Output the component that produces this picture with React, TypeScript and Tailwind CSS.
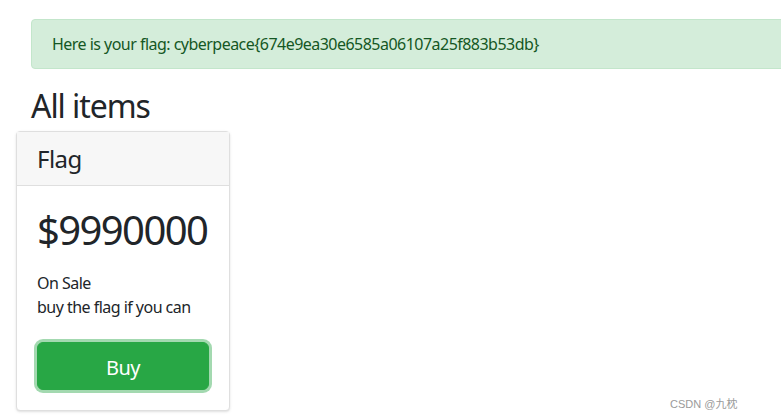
import React from "react"

export default function App() {
  return (
    <div className="relative w-[781px] h-[418px] overflow-hidden bg-white text-[#212529] font-['Noto_Sans',sans-serif] tracking-[-0.033em]">
      <div className="pl-[31px] pt-[19px]">
        <div className="w-[800px] h-[50px] rounded border border-[#c3e6cb] bg-[#d4edda] text-[#155724] text-[16px] leading-6 px-5 py-3">
          Here is your flag: cyberpeace{"{"}674e9ea30e6585a06107a25f883b53db{"}"}
        </div>
        <h2 className="mt-4 mb-2 pt-[3px] text-[32px] leading-[35px] font-normal tracking-[-0.033em]">All items</h2>
        <div className="-ml-[15px] flex">
          <div className="w-[214px] rounded border border-[#dfdfdf] bg-white shadow-sm">
            <div className="h-[54px] bg-[#f7f7f7] border-b border-[#dfdfdf] px-5 flex items-center">
              <h4 className="text-[24px] leading-[29px] font-normal">Flag</h4>
            </div>
            <div className="p-5">
              <h1 className="text-[40px] leading-[48px] font-normal whitespace-nowrap tracking-[-0.04em]">$9990000</h1>
              <p className="mt-[17px] text-[16px] leading-6">
                On Sale
                <br />
                buy the flag if you can
              </p>
              <button className="mt-[23px] w-full h-[48px] pt-[3px] rounded-md border border-[#28a745] bg-[#28a745] text-white text-[20px] ring-[3px] ring-[rgba(72,180,97,0.5)]">
                Buy
              </button>
            </div>
          </div>
        </div>
      </div>
      <div className="absolute left-[670px] top-[396px] text-[11px] tracking-normal text-[#9a9a9a] font-['Liberation_Sans','Noto_Sans_CJK_SC',sans-serif]">
        CSDN @九枕
      </div>
    </div>
  )
}
